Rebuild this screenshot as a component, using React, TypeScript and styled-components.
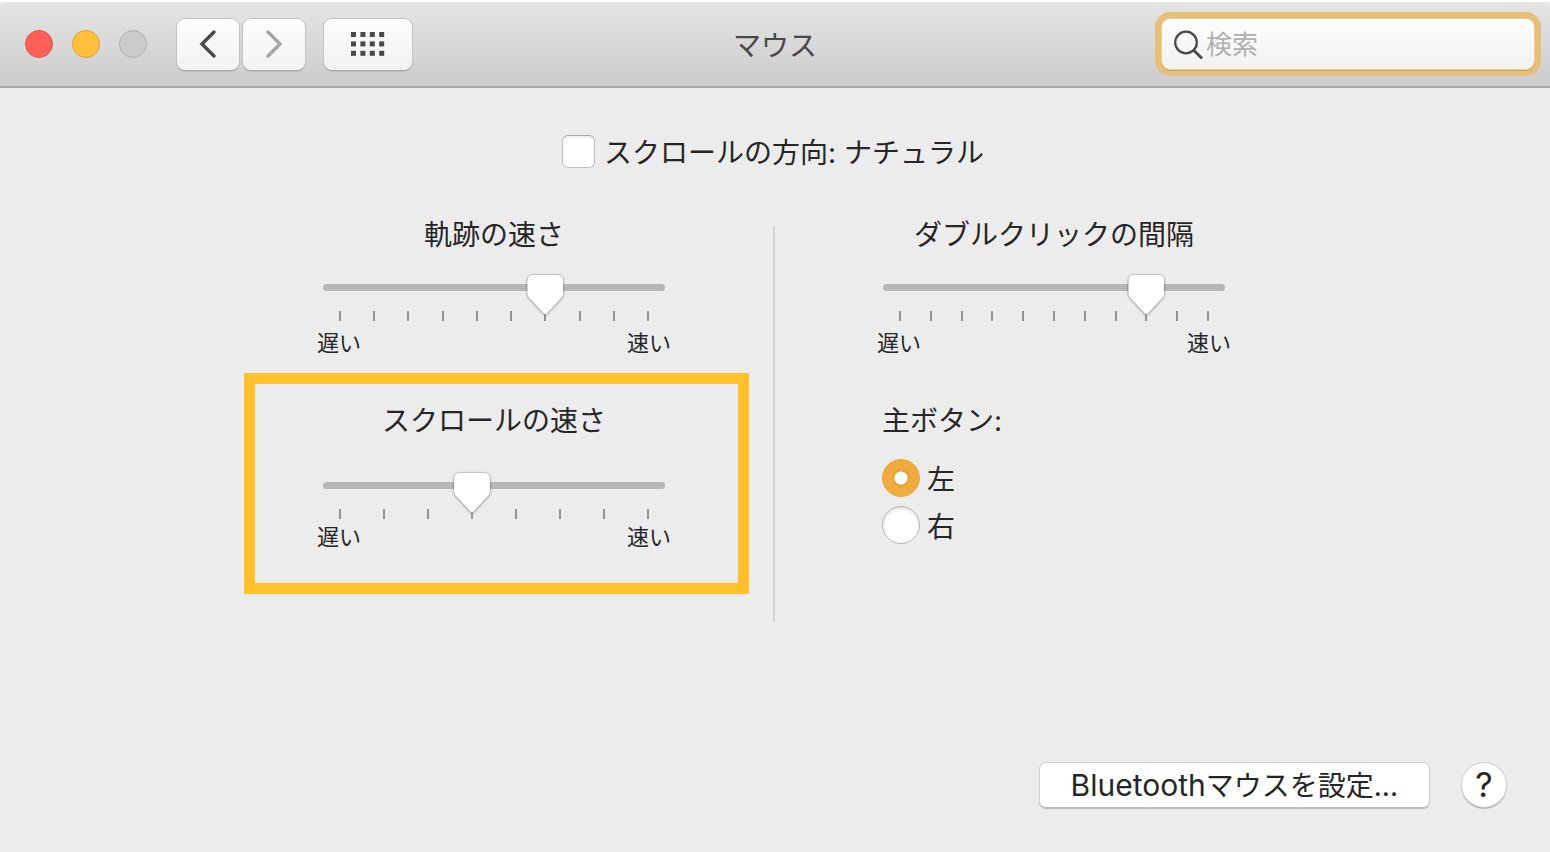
import React, { useState } from "react";
import styled, { createGlobalStyle } from "styled-components";

const GlobalStyle = createGlobalStyle`
  *, *::before, *::after { box-sizing: border-box; }
  body {
    margin: 0;
    background: #ececec;
    color: #262626;
    font-family: Inter, "Noto Sans CJK JP", sans-serif;
    font-size: 28px;
    line-height: 40px;
  }
  button, input { font: inherit; color: inherit; margin: 0; }
`;

const Window = styled.div`
  display: flex;
  flex-direction: column;
  min-height: 100vh;
  border-top: 2px solid #fff;
`;

const TitleBar = styled.header`
  display: grid;
  grid-template-columns: 1fr auto 1fr;
  align-items: center;
  height: 86px;
  padding: 0 16px;
  border-bottom: 2px solid #a9a9a9;
  border-top-left-radius: 6px;
  border-top-right-radius: 6px;
  background: linear-gradient(#e5e5e5, #cccccc);
`;

const Controls = styled.div`
  display: flex;
  align-items: center;
  padding-left: 9px;
`;

const Lights = styled.div`
  display: flex;
  gap: 19px;
  margin-right: 29px;
`;

const Light = styled.button<{ $fill: string; $edge: string }>`
  width: 28px;
  height: 28px;
  padding: 0;
  border: 1px solid ${(p) => p.$edge};
  border-radius: 50%;
  background: ${(p) => p.$fill};
`;

const ToolButton = styled.button<{ $wide?: boolean }>`
  display: flex;
  align-items: center;
  justify-content: center;
  width: ${(p) => (p.$wide ? 90 : 64)}px;
  height: 53px;
  margin-left: ${(p) => (p.$wide ? 17 : 0)}px;
  padding: 0;
  border: 1px solid #c3c3c3;
  border-bottom-color: #a8a8a8;
  border-radius: 9px;
  background: linear-gradient(#fdfdfd, #f2f2f2);
  box-shadow: 0 1px 1px rgba(0, 0, 0, 0.1);
`;

const NavPair = styled.div`
  display: flex;
  gap: 2px;
`;

const Title = styled.h1`
  margin: 0;
  padding-top: 4px;
  color: #484848;
  font-size: 28px;
  font-weight: 400;
`;

const SearchBox = styled.label`
  display: flex;
  align-items: center;
  justify-self: end;
  width: 372px;
  height: 50px;
  padding-left: 12px;
  gap: 2px;
  border-radius: 8px;
  background: linear-gradient(#fdfdfd, #f2f2f2);
  box-shadow: 0 0 0 1px #f3cd8b, 0 1px 0 1px #c99f58, 0 0 0 7px #e7bf7d;
`;

const SearchInput = styled.input`
  flex: 1;
  min-width: 0;
  height: 42px;
  padding: 0;
  border: 0;
  outline: 0;
  background: transparent;
  font-size: 26px;
  &::placeholder { color: #b0b0b0; opacity: 1; }
`;

const Pane = styled.main`
  display: flex;
  flex: 1;
  flex-direction: column;
  padding: 43px 43px 44px;
`;

const OptionText = styled.span`
  padding-top: 4px;
  line-height: 36px;
`;

const DirectionLabel = styled.label`
  display: flex;
  align-items: center;
  align-self: center;
  gap: 9px;
  margin-right: 4px;
`;

const CheckBox = styled.input`
  appearance: none;
  width: 33px;
  height: 33px;
  border: 1px solid #c0c0c0;
  border-top-color: #a9a9a9;
  border-radius: 6px;
  background: #fff;
  box-shadow: inset 0 2px 3px rgba(0, 0, 0, 0.08);
  &:checked { background: #f0ab3c; }
`;

const Columns = styled.div`
  display: grid;
  grid-template-columns: 558px 2px 558px;
  justify-content: center;
  margin: 43px 2px 0 0;
`;

const Column = styled.section`
  display: flex;
  flex-direction: column;
`;

const Divider = styled.div`
  margin-top: 12px;
  background: #d3d3d3;
`;

const Highlight = styled.div`
  margin: 15px 24px 28px 29px;
  padding: 16px 5px 31px 0;
  border: 11px solid #ffc02b;
`;

const Control = styled.div`
  display: flex;
  flex-direction: column;
  width: 354px;
  margin: 0 auto;
`;

const Caption = styled.label`
  line-height: 42px;
  text-align: center;
`;

const Slider = styled.div<{ $roomy?: boolean }>`
  position: relative;
  height: 47px;
  margin: ${(p) => (p.$roomy ? "30px 6px 3px" : "18px 6px 7px")};
  padding-top: 10px;
`;

const Track = styled.div`
  height: 7px;
  border-radius: 4px;
  background: #b7b7b7;
`;

const Ticks = styled.div`
  display: flex;
  justify-content: space-between;
  padding: 20px 16px 0;
`;

const Tick = styled.span`
  width: 2px;
  height: 10px;
  background: #939393;
`;

const Range = styled.input`
  position: absolute;
  top: 0;
  left: -1px;
  width: calc(100% + 2px);
  height: 42px;
  appearance: none;
  background: transparent;
  filter: drop-shadow(0 0 1px rgba(0, 0, 0, 0.4)) drop-shadow(0 1px 1px rgba(0, 0, 0, 0.2));
  outline: 0;
  &::-webkit-slider-runnable-track {
    height: 42px;
    background: transparent;
  }
  &::-webkit-slider-thumb {
    appearance: none;
    width: 36px;
    height: 42px;
    background: #fff;
    clip-path: path("M6 1H30Q36 1 36 7V19Q36 22 34 24L19 40Q18 41 17 40L2 24Q0 22 0 19V7Q0 1 6 1Z");
  }
`;

const Ends = styled.div`
  display: flex;
  justify-content: space-between;
  font-size: 22px;
  line-height: 30px;
`;

const RadioGroup = styled.fieldset`
  display: flex;
  flex-direction: column;
  gap: 9px;
  width: 354px;
  margin: 42px auto 0;
  padding: 0 0 0 5px;
  border: 0;
`;

const Legend = styled.legend`
  margin-bottom: 17px;
  padding: 0;
  line-height: 42px;
`;

const RadioLabel = styled.label`
  display: flex;
  align-items: center;
  gap: 7px;
  height: 38px;
`;

const Radio = styled.input`
  appearance: none;
  width: 38px;
  height: 38px;
  border: 1px solid #b5b5b5;
  border-radius: 50%;
  background: #fff;
  box-shadow: inset 0 2px 3px rgba(0, 0, 0, 0.12);
  &:checked {
    border-color: #eda63a;
    background: radial-gradient(circle, #fff 6px, #e5a035 7px, #f0ab3f 10px);
    box-shadow: none;
  }
`;

const Footer = styled.footer`
  display: flex;
  justify-content: flex-end;
  gap: 31px;
  margin-top: auto;
`;

const PushButton = styled.button<{ $round?: boolean }>`
  height: 46px;
  width: ${(p) => (p.$round ? "46px" : "auto")};
  padding: ${(p) => (p.$round ? "0" : "0 31px")};
  border: 1px solid #d2d2d2;
  border-bottom-color: #bdbdbd;
  border-radius: ${(p) => (p.$round ? "50%" : "7px")};
  background: #fff;
  font-size: ${(p) => (p.$round ? "34px" : "28px")};
  box-shadow: 0 1px 1px rgba(0, 0, 0, 0.22);
`;

const Latin = styled.span`
  font-size: 30px;
`;

type SpeedProps = { id: string; label: string; steps: number; initial: number; roomy?: boolean };

function SpeedControl({ id, label, steps, initial, roomy }: SpeedProps) {
  const [value, setValue] = useState(initial);
  return (
    <Control>
      <Caption htmlFor={id}>{label}</Caption>
      <Slider $roomy={roomy}>
        <Track />
        <Ticks>
          {Array.from({ length: steps }, (_, i) => (
            <Tick key={i} />
          ))}
        </Ticks>
        <Range
          id={id}
          type="range"
          min={0}
          max={steps - 1}
          value={value}
          onChange={(e) => setValue(Number(e.target.value))}
        />
      </Slider>
      <Ends>
        <span>遅い</span>
        <span>速い</span>
      </Ends>
    </Control>
  );
}

function Chevron({ flip, color }: { flip?: boolean; color: string }) {
  return (
    <svg width="18" height="30" viewBox="0 0 18 30" fill="none" aria-hidden="true">
      <path
        d={flip ? "M3 3L15 15L3 27" : "M15 3L3 15L15 27"}
        stroke={color}
        strokeWidth="3.4"
        strokeLinecap="round"
        strokeLinejoin="miter"
      />
    </svg>
  );
}

function GridIcon() {
  return (
    <svg width="34" height="24" viewBox="0 0 34 24" fill="#484848" aria-hidden="true">
      {[0, 9.4, 18.8].map((y) =>
        [0, 9.4, 18.8, 28.2].map((x) => <rect key={`${x}-${y}`} x={x} y={y} width="5" height="5" />)
      )}
    </svg>
  );
}

function SearchIcon() {
  return (
    <svg width="30" height="30" viewBox="0 0 30 30" fill="none" stroke="#484848" aria-hidden="true">
      <circle cx="12" cy="13.5" r="10.8" strokeWidth="2.2" />
      <path d="M19.7 21.2L28 29.5" strokeWidth="2.8" />
    </svg>
  );
}

export default function App() {
  const [natural, setNatural] = useState(false);
  const [side, setSide] = useState("left");
  return (
    <>
      <GlobalStyle />
      <Window>
        <TitleBar>
          <Controls>
            <Lights>
              <Light $fill="#ff5f58" $edge="#e2504a" aria-label="閉じる" />
              <Light $fill="#ffbf3a" $edge="#e0a132" aria-label="しまう" />
              <Light $fill="#cbcbcb" $edge="#b0b0b0" aria-label="拡大" disabled />
            </Lights>
            <NavPair>
              <ToolButton aria-label="戻る">
                <Chevron color="#484848" />
              </ToolButton>
              <ToolButton aria-label="進む">
                <Chevron flip color="#a6a6a6" />
              </ToolButton>
            </NavPair>
            <ToolButton $wide aria-label="すべてを表示">
              <GridIcon />
            </ToolButton>
          </Controls>
          <Title>マウス</Title>
          <SearchBox>
            <SearchIcon />
            <SearchInput type="search" placeholder="検索" aria-label="検索" />
          </SearchBox>
        </TitleBar>
        <Pane>
          <DirectionLabel>
            <CheckBox type="checkbox" checked={natural} onChange={(e) => setNatural(e.target.checked)} />
            <OptionText>スクロールの方向: ナチュラル</OptionText>
          </DirectionLabel>
          <Columns>
            <Column>
              <SpeedControl id="tracking" label="軌跡の速さ" steps={10} initial={6} />
              <Highlight>
                <SpeedControl id="scrolling" label="スクロールの速さ" steps={8} initial={3} roomy />
              </Highlight>
            </Column>
            <Divider />
            <Column>
              <SpeedControl id="double-click" label="ダブルクリックの間隔" steps={11} initial={8} />
              <RadioGroup>
                <Legend>主ボタン:</Legend>
                <RadioLabel>
                  <Radio type="radio" name="side" checked={side === "left"} onChange={() => setSide("left")} />
                  <OptionText>左</OptionText>
                </RadioLabel>
                <RadioLabel>
                  <Radio type="radio" name="side" checked={side === "right"} onChange={() => setSide("right")} />
                  <OptionText>右</OptionText>
                </RadioLabel>
              </RadioGroup>
            </Column>
          </Columns>
          <Footer>
            <PushButton>
              <Latin>Bluetooth</Latin>マウスを設定...
            </PushButton>
            <PushButton $round aria-label="ヘルプ">?</PushButton>
          </Footer>
        </Pane>
      </Window>
    </>
  );
}
